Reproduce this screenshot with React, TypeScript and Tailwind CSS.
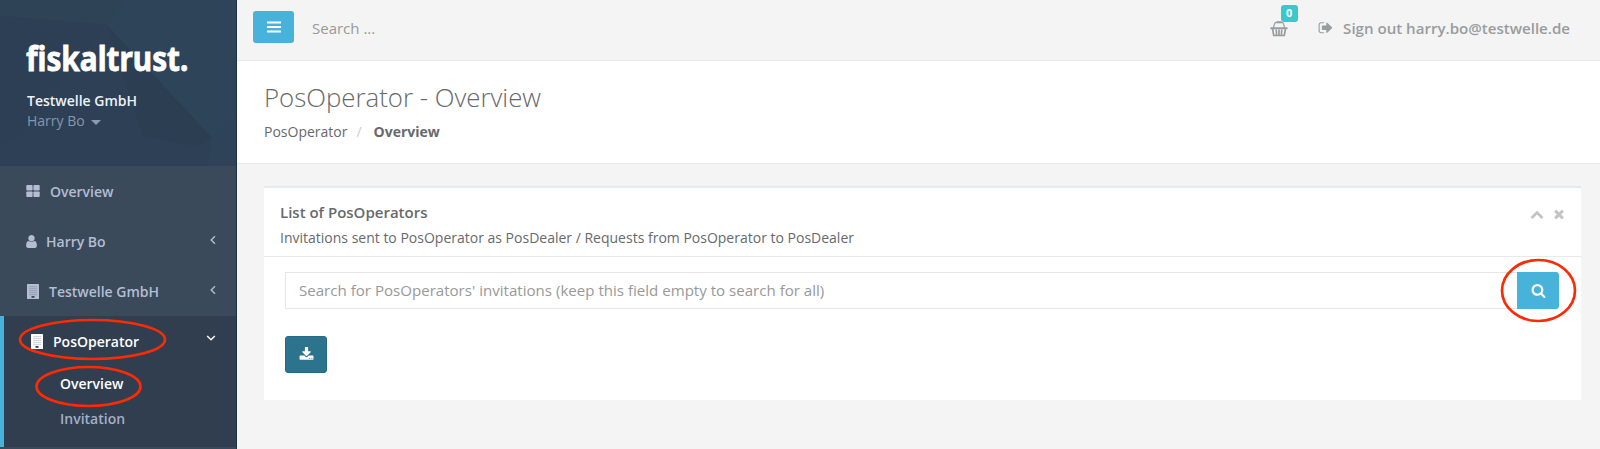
import React from "react";

const P = {
  user: "M1536 1399q0 109-62.5 187t-150.5 78h-854q-88 0-150.5-78t-62.5-187q0-85 8.5-160.5t31.5-152 58.5-131 94-89 134.5-34.5q131 128 313 128t313-128q76 0 134.5 34.5t94 89 58.5 131 31.5 152 8.5 160.5zm-256-887q0 159-112.5 271.5t-271.5 112.5-271.5-112.5-112.5-271.5 112.5-271.5 271.5-112.5 271.5 112.5 112.5 271.5z",
  search:
    "M1216 832q0-185-131.5-316.5t-316.5-131.5-316.5 131.5-131.5 316.5 131.5 316.5 316.5 131.5 316.5-131.5 131.5-316.5zm512 832q0 52-38 90t-90 38q-54 0-90-38l-343-342q-179 124-399 124-143 0-273.5-55.5t-225-150-150-225-55.5-273.5 55.5-273.5 150-225 225-150 273.5-55.5 273.5 55.5 225 150 150 225 55.5 273.5q0 220-124 399l343 343q37 37 37 90z",
  times:
    "M1490 1322q0 40-28 68l-136 136q-28 28-68 28t-68-28l-294-294-294 294q-28 28-68 28t-68-28l-136-136q-28-28-28-68t28-68l294-294-294-294q-28-28-28-68t28-68l136-136q28-28 68-28t68 28l294 294 294-294q28-28 68-28t68 28l136 136q28 28 28 68t-28 68l-294 294 294 294q28 28 28 68z",
  chevronUp:
    "M1683 1331l-166 165q-19 19-45 19t-45-19l-531-531-531 531q-19 19-45 19t-45-19l-166-165q-19-19-19-45.5t19-45.5l742-741q19-19 45-19t45 19l742 741q19 19 19 45.5t-19 45.5z",
  download:
    "M1344 1344q0-26-19-45t-45-19-45 19-19 45 19 45 45 19 45-19 19-45zm256 0q0-26-19-45t-45-19-45 19-19 45 19 45 45 19 45-19 19-45zm128-224v320q0 40-28 68t-68 28h-1472q-40 0-68-28t-28-68v-320q0-40 28-68t68-28h465l135 136q58 56 136 56t136-56l136-136h464q40 0 68 28t28 68zm-325-569q17 41-14 70l-448 448q-18 19-45 19t-45-19l-448-448q-31-29-14-70 17-39 59-39h256v-448q0-26 19-45t45-19h256q26 0 45 19t19 45v448h256q42 0 59 39z",
  signOut:
    "M704 1440q0 4 1 20t.5 26.5-3 23.5-10 19.5-20.5 6.5h-320q-119 0-203.5-84.5t-84.5-203.5v-704q0-119 84.5-203.5t203.5-84.5h320q13 0 22.5 9.5t9.5 22.5q0 4 1 20t.5 26.5-3 23.5-10 19.5-20.5 6.5h-320q-66 0-113 47t-47 113v704q0 66 47 113t113 47h312l11.5 1 11.5 3 8 5.5 7 9 2 13.5zm928-544q0 26-19 45l-544 544q-19 19-45 19t-45-19-19-45v-288h-448q-26 0-45-19t-19-45v-384q0-26 19-45t45-19h448v-288q0-26 19-45t45-19 45 19l544 544q19 19 19 45z",
};

function Glyph({ d, className }: { d: string; className: string }) {
  return (
    <svg viewBox="0 0 1792 1792" fill="currentColor" className={"shrink-0 " + className}>
      <path d={d} />
    </svg>
  );
}

function Tiles() {
  return (
    <svg viewBox="0 0 14 12" fill="currentColor" className="mr-[10px] h-[12px] w-[14px] shrink-0">
      <rect x="0.3" width="6.3" height="5.500" rx="0.9" />
      <rect x="7.400" width="6.3" height="5.500" rx="0.9" />
      <rect x="0.3" y="6.400" width="6.3" height="5.500" rx="0.9" />
      <rect x="7.400" y="6.400" width="6.3" height="5.500" rx="0.9" />
    </svg>
  );
}

function Building({ className, hole }: { className: string; hole: string }) {
  const xs = [2.6, 4.6, 6.6, 8.6];
  const ys = [2.2, 4.2, 6.2, 8.2, 10.2];
  return (
    <svg viewBox="0 0 12 15" className={"h-[15px] w-[12px] shrink-0 " + className}>
      <rect width="12" height="15" rx="0.6" fill="currentColor" />
      {ys.map((y) => xs.map((x) => <rect key={x + "-" + y} x={x} y={y} width="0.9" height="1" fill={hole} opacity="0.55" />))}
      <rect x="4.5" y="12" width="3" height="1.8" fill={hole} />
    </svg>
  );
}

function Arrow({ down }: { down?: boolean }) {
  return (
    <svg viewBox="0 0 10 10" fill="none" stroke="currentColor" strokeWidth="1.4" className={down ? "mb-[6px] size-[10px] shrink-0" : "mb-[2px] size-[10px] shrink-0"}>
      <path d={down ? "M1.2 3 5 6.8 8.8 3" : "M7 1.2 3.2 5 7 8.8"} />
    </svg>
  );
}

function Basket() {
  return (
    <svg viewBox="0 0 18 16" className="h-[16px] w-[18px]" fill="none" stroke="currentColor">
      <path d="M3.3 7 4.6 2.6Q5 1.300 6.300 1.300H11.700Q13 1.300 13.400 2.600L14.700 7" strokeWidth="1.200" />
      <path d="M6.500 1.300H11.500" strokeWidth="2" />
      <path d="M1.200 7.200H16.800" strokeWidth="2" strokeLinecap="round" />
      <path d="M2.600 8 3.700 14.500H14.300L15.400 8M6.200 8.500 6.600 14M9 8.500V14M11.800 8.500 11.400 14" strokeWidth="1.700" />
    </svg>
  );
}

export default function App() {
  return (
    <div className="relative flex h-[449px] w-[1600px] overflow-hidden bg-[#f4f4f4] font-['Open_Sans',sans-serif] text-[14px] text-[#676a6c]">
      <aside className="flex w-[237px] shrink-0 flex-col border-r border-[#1b3049] bg-[#3a4a5b] font-semibold text-[#b3bdd3]">
        <div className="relative h-[166px] bg-[#2d4055]">
          <svg viewBox="0 0 236 166" className="absolute inset-0 h-full w-full">
            <path d="M0 0H125L107 25 0 16Z" fill="#2f4357" />
            <path d="M125 0H236V120L212 138 107 25Z" fill="#2e4459" />
            <path d="M107 25 212 138 195 146 143 136Z" fill="#2c3f52" />
            <path d="M212 138 236 112V166H208Z" fill="#2e4358" />
            <path d="M0 16 107 25 20 135 0 144Z" fill="#2c3f54" />
          </svg>
          <div className="relative flex flex-col pl-[27px] pt-[36px]">
            <div className="-ml-px origin-left scale-x-[0.876] whitespace-nowrap font-['Noto_Sans',sans-serif] text-[34px] font-bold leading-[44px] text-white [-webkit-text-stroke:0.8px_white]">fiskaltrust.</div>
            <div className="mt-[11px] leading-[20px] text-[#eef2f8]">Testwelle GmbH</div>
            <div className="flex items-center leading-[20px] font-normal text-[#8597ad]">
              Harry Bo
              <span className="ml-[6px] mt-[3px] border-x-[5px] border-t-[5px] border-x-transparent border-t-[#8b9bb0]" />
            </div>
          </div>
        </div>
        <div className="flex h-[50px] items-center pl-[26px]">
          <Tiles />
          <span>Overview</span>
        </div>
        <div className="flex h-[50px] items-center pl-[26px] pr-[18px]">
          <Glyph d={P.user} className="-ml-[2px] mr-[7px] size-[15px]" />
          <span className="grow">Harry Bo</span>
          <Arrow />
        </div>
        <div className="flex h-[50px] items-center pl-[27px] pr-[18px]">
          <Building className="mr-[10px]" hole="#3a4a5b" />
          <span className="grow">Testwelle GmbH</span>
          <Arrow />
        </div>
        <div className="h-[131px] border-l-4 border-[#48b3da] bg-[#303e4f]">
          <div className="flex h-[50px] items-center pl-[27px] pr-[20px] text-white">
            <Building className="mr-[10px]" hole="#303e4f" />
            <span className="grow">PosOperator</span>
            <Arrow down />
          </div>
          <div className="-mt-px flex h-[36px] items-center pl-[56px] text-white">Overview</div>
          <div className="flex h-[34px] items-center pl-[56px] text-[#a4afc7]">Invitation</div>
        </div>
        <div className="h-[2px]" />
      </aside>

      <div className="flex grow flex-col">
        <header className="flex h-[61px] items-start border-b border-[#e7eaec] pl-[16px] pr-[30px] pt-[11px]">
          <button className="flex h-[32px] w-[41px] items-center justify-center rounded-[3px] bg-[#48b3da]">
            <svg viewBox="0 0 14 12" className="h-[12px] w-[14px]" fill="white">
              <rect y="0.500" width="14" height="2" rx="0.3" />
              <rect y="5" width="14" height="2" rx="0.3" />
              <rect y="9.500" width="14" height="2" rx="0.3" />
            </svg>
          </button>
          <span className="ml-[18px] grow pt-[7px] text-[15px] leading-[20px] text-[#999]">Search ...</span>
          <span className="relative mt-[10px] text-[#999c9e]">
            <Basket />
            <span className="absolute left-[11px] top-[-16px] flex h-[17px] w-[17px] items-center justify-center rounded-[3px] bg-[#3bc8cd] text-[11px] font-bold text-white">0</span>
          </span>
          <Glyph d={P.signOut} className="ml-[30px] mt-[9px] size-[15.500px] text-[#999c9e]" />
          <span className="ml-[10px] pt-[7px] text-[15.080px] font-semibold leading-[20px] text-[#999c9e]">Sign out harry.bo@testwelle.de</span>
        </header>
        <section className="h-[103px] border-b border-[#e7eaec] bg-white pl-[27px] pt-[20px]">
          <h1 className="text-[25.8px] font-light leading-[32px]">PosOperator - Overview</h1>
          <div className="mt-[9px] flex leading-[20px]">
            <span>PosOperator</span>
            <span className="ml-[9px] text-[#ccc]">/</span>
            <b className="ml-[12px]">Overview</b>
          </div>
        </section>
        <main className="ml-[27px] mt-[22px] h-[214px] w-[1317px] border-t-2 border-[#e7eaec] bg-white">
          <div className="flex h-[69px] justify-between border-b border-[#e7eaec] pl-[16px] pr-[15px] pt-[14px]">
            <div>
              <h2 className="text-[15px] font-semibold leading-[20px]">List of PosOperators</h2>
              <p className="mt-[6px] leading-[20px]">Invitations sent to PosOperator as PosDealer / Requests from PosOperator to PosDealer</p>
            </div>
            <div className="flex gap-[8px] pt-[5px] text-[#c4c4c4]">
              <Glyph d={P.chevronUp} className="size-[14px]" />
              <Glyph d={P.times} className="size-[14px]" />
            </div>
          </div>
          <div className="ml-[21px] mt-[15px] flex h-[37px] w-[1274px]">
            <div className="flex grow items-center border border-r-0 border-[#e5e6e7] pl-[13px] text-[15.080px] text-[#999]">Search for PosOperators' invitations (keep this field empty to search for all)</div>
            <button className="flex w-[42px] items-center justify-center rounded-r-[3px] bg-[#48b3da] text-white">
              <Glyph d={P.search} className="size-[15px]" />
            </button>
          </div>
          <button className="ml-[21px] mt-[27px] flex h-[37px] w-[42px] items-center justify-center rounded-[3px] border border-[#256a82] bg-[#2c748d] text-white">
            <Glyph d={P.download} className="size-[15px]" />
          </button>
        </main>
      </div>

      <svg viewBox="0 0 1600 449" className="pointer-events-none absolute inset-0 h-[449px] w-[1600px]" fill="none" stroke="#fb2b05" strokeWidth="2.700">
        <ellipse cx="92.500" cy="339.500" rx="72.500" ry="19.500" />
        <ellipse cx="88.500" cy="386.500" rx="52" ry="19.500" />
        <ellipse cx="1538.500" cy="290.500" rx="36.500" ry="30.500" />
      </svg>
    </div>
  );
}
